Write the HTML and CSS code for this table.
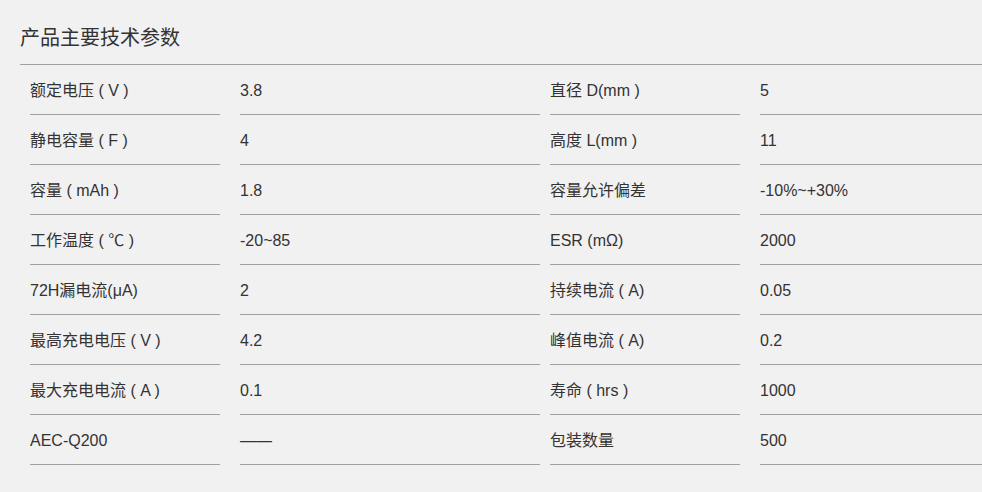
FILE: index.html
```html
<!DOCTYPE html>
<html lang="zh-CN">
<head>
<meta charset="utf-8">
<title>产品主要技术参数</title>
<link rel="stylesheet" href="styles.css">
</head>
<body>
<section class="params">
  <h2 class="params-title">产品主要技术参数</h2>
  <div class="spec-grid">
    <div class="cell label">额定电压 ( V )</div><div class="cell value">3.8</div>
    <div class="cell label alt">直径 D(mm )</div><div class="cell value alt">5</div>

    <div class="cell label">静电容量 ( F )</div><div class="cell value">4</div>
    <div class="cell label alt">高度 L(mm )</div><div class="cell value alt">11</div>

    <div class="cell label">容量 ( mAh )</div><div class="cell value">1.8</div>
    <div class="cell label alt">容量允许偏差</div><div class="cell value alt">-10%~+30%</div>

    <div class="cell label">工作温度 ( ℃ )</div><div class="cell value">-20~85</div>
    <div class="cell label alt">ESR (mΩ)</div><div class="cell value alt">2000</div>

    <div class="cell label">72H漏电流(μA)</div><div class="cell value">2</div>
    <div class="cell label alt">持续电流 ( A)</div><div class="cell value alt">0.05</div>

    <div class="cell label">最高充电电压 ( V )</div><div class="cell value">4.2</div>
    <div class="cell label alt">峰值电流 ( A)</div><div class="cell value alt">0.2</div>

    <div class="cell label">最大充电电流 ( A )</div><div class="cell value">0.1</div>
    <div class="cell label alt">寿命 ( hrs )</div><div class="cell value alt">1000</div>

    <div class="cell label">AEC-Q200</div><div class="cell value">——</div>
    <div class="cell label alt">包装数量</div><div class="cell value alt">500</div>
  </div>
</section>
</body>
</html>
```
FILE: styles.css
```css
html, body {
  margin: 0;
  padding: 0;
  background: #f1f1f1;
  overflow: hidden;
}
body {
  font-family: "Liberation Sans", "Noto Sans CJK SC", sans-serif;
  color: #333;
}
.params {
  margin-left: 20px;
}
.params-title {
  margin: 0;
  padding: 23px 0 11px;
  line-height: 30px;
  font-size: 20px;
  font-weight: normal;
  color: #333;
  border-bottom: 1px solid #a0a0a0;
}
.spec-grid {
  display: grid;
  grid-template-columns: 200px 320px 200px 1fr;
}
.cell {
  font-size: 16px;
  line-height: 47px;
  height: 47px;
  padding-top: 2px;
  border-bottom: 1px solid #a0a0a0;
  white-space: nowrap;
}
.label {
  margin-left: 10px;
}
.value {
  margin-left: 20px;
}
```
